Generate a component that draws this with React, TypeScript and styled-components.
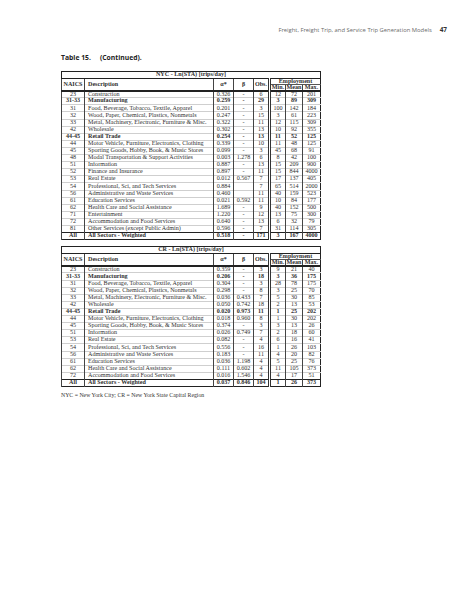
import React from 'react';
import styled, { createGlobalStyle } from 'styled-components';

const GlobalStyle = createGlobalStyle`
  html, body {
    margin: 0;
    padding: 0;
    background: #fff;
  }
`;

const Page = styled.div`
  width: 474px;
  height: 613px;
  box-sizing: border-box;
  padding: 26px 0 0 61px;
  display: flex;
  flex-direction: column;
  align-items: flex-start;
`;

const RunningHead = styled.div`
  align-self: stretch;
  display: flex;
  justify-content: flex-end;
  align-items: baseline;
  gap: 8px;
  padding-right: 27px;
  font-family: "Open Sans", "Liberation Sans", sans-serif;
  font-size: 5.85px;
  line-height: 8px;
  color: #6a6a6a;
`;

const PageNo = styled.span`
  font-weight: 700;
  font-size: 6.4px;
  color: #333;
`;

const Caption = styled.div`
  margin-top: 19px;
  display: flex;
  gap: 9px;
  font-family: "Open Sans", "Liberation Sans", sans-serif;
  font-weight: 700;
  font-size: 6.8px;
  line-height: 9px;
  color: #222;
`;

const Table = styled.table<{ $gap: number }>`
  margin-top: ${p => p.$gap}px;
  width: 259px;
  table-layout: fixed;
  border-collapse: collapse;
  border: 1.5px solid #222;
  font-family: "Liberation Serif", "Times New Roman", serif;
  font-size: 6.1px;
  color: #303030;
`;

const Col = styled.col<{ $w: number }>`
  width: ${p => p.$w}px;
`;

const BarCell = styled.th`
  height: 5.5px;
  padding: 0;
  line-height: 5.5px;
  font-weight: 700;
  text-align: center;
  border-bottom: 1.5px solid #222;
`;

const HeadCell = styled.th<{ $left?: boolean; $sep?: boolean; $base?: boolean }>`
  height: 5px;
  padding: ${p => (p.$left ? '0 0 0 3px' : '0')};
  line-height: 5px;
  font-weight: 700;
  text-align: ${p => (p.$left ? 'left' : 'center')};
  border-left: ${p => (p.$sep ? '3px double #333' : '1px solid #444')};
  border-bottom: ${p => (p.$base ? '2px solid #222' : '1px solid #555')};
`;

const Row = styled.tr`
  height: 7.1px;
`;

const Cell = styled.td<{ $left?: boolean; $sep?: boolean; $bold?: boolean; $total?: boolean }>`
  padding: ${p => (p.$left ? '0 0 0 3px' : '0')};
  line-height: 5.8px;
  text-align: ${p => (p.$left ? 'left' : 'center')};
  font-weight: ${p => (p.$bold ? 700 : 400)};
  white-space: nowrap;
  overflow: hidden;
  border-left: ${p => (p.$sep ? '3px double #333' : '1px solid #444')};
  border-top: ${p => (p.$total ? '1.5px solid #222' : '1px solid #cfcfcf')};
`;

const Footnote = styled.div`
  margin-top: 5px;
  font-family: "Liberation Serif", "Times New Roman", serif;
  font-size: 5.8px;
  line-height: 7px;
  color: #333;
`;

type Line = [string, string, string, string, string, string, string, string];

const nyc: Line[] = [
  ['23', 'Construction', '0.326', '-', '6', '12', '72', '201'],
  ['31-33', 'Manufacturing', '0.259', '-', '29', '3', '89', '309'],
  ['31', 'Food, Beverage, Tobacco, Textile, Apparel', '0.201', '-', '3', '100', '142', '184'],
  ['32', 'Wood, Paper, Chemical, Plastics, Nonmetals', '0.247', '-', '15', '3', '61', '223'],
  ['33', 'Metal, Machinery, Electronic, Furniture & Misc.', '0.322', '-', '11', '12', '115', '309'],
  ['42', 'Wholesale', '0.302', '-', '13', '10', '92', '355'],
  ['44-45', 'Retail Trade', '0.254', '-', '13', '11', '52', '125'],
  ['44', 'Motor Vehicle, Furniture, Electronics, Clothing', '0.339', '-', '10', '11', '48', '125'],
  ['45', 'Sporting Goods, Hobby, Book, & Music Stores', '0.099', '-', '3', '45', '68', '91'],
  ['48', 'Modal Transportation & Support Activities', '0.003', '1.278', '6', '8', '42', '100'],
  ['51', 'Information', '0.887', '-', '13', '15', '209', '900'],
  ['52', 'Finance and Insurance', '0.897', '-', '11', '15', '844', '4000'],
  ['53', 'Real Estate', '0.012', '0.567', '7', '17', '137', '405'],
  ['54', 'Professional, Sci, and Tech Services', '0.884', '', '7', '65', '514', '2000'],
  ['56', 'Administrative and Waste Services', '0.460', '', '11', '40', '159', '523'],
  ['61', 'Education Services', '0.021', '0.592', '11', '10', '84', '177'],
  ['62', 'Health Care and Social Assistance', '1.689', '-', '9', '40', '152', '500'],
  ['71', 'Entertainment', '1.220', '-', '12', '13', '75', '300'],
  ['72', 'Accommodation and Food Services', '0.640', '-', '13', '6', '32', '79'],
  ['81', 'Other Services (except Public Admin)', '0.596', '-', '7', '31', '114', '305'],
  ['All', 'All Sectors - Weighted', '0.518', '-', '171', '3', '167', '4000'],
];

const cr: Line[] = [
  ['23', 'Construction', '0.359', '-', '3', '9', '21', '40'],
  ['31-33', 'Manufacturing', '0.206', '-', '18', '3', '36', '175'],
  ['31', 'Food, Beverage, Tobacco, Textile, Apparel', '0.304', '-', '3', '28', '78', '175'],
  ['32', 'Wood, Paper, Chemical, Plastics, Nonmetals', '0.298', '-', '8', '3', '25', '70'],
  ['33', 'Metal, Machinery, Electronic, Furniture & Misc.', '0.036', '0.433', '7', '5', '30', '85'],
  ['42', 'Wholesale', '0.050', '0.742', '18', '2', '13', '53'],
  ['44-45', 'Retail Trade', '0.020', '0.973', '11', '1', '25', '202'],
  ['44', 'Motor Vehicle, Furniture, Electronics, Clothing', '0.018', '0.960', '8', '1', '30', '202'],
  ['45', 'Sporting Goods, Hobby, Book, & Music Stores', '0.374', '-', '3', '3', '13', '26'],
  ['51', 'Information', '0.026', '0.749', '7', '2', '18', '60'],
  ['53', 'Real Estate', '0.082', '-', '4', '6', '16', '41'],
  ['54', 'Professional, Sci, and Tech Services', '0.556', '-', '16', '1', '26', '103'],
  ['56', 'Administrative and Waste Services', '0.183', '-', '11', '4', '20', '82'],
  ['61', 'Education Services', '0.036', '1.198', '4', '5', '25', '76'],
  ['62', 'Health Care and Social Assistance', '0.111', '0.602', '4', '11', '105', '373'],
  ['72', 'Accommodation and Food Services', '0.016', '1.546', '4', '4', '17', '51'],
  ['All', 'All Sectors - Weighted', '0.037', '0.846', '104', '1', '26', '373'],
];

const widths = [23, 129, 20, 20, 16, 16, 17, 18];
const boldCodes = ['31-33', '44-45', 'All'];

const SectorTable = ({ title, rows, gap }: { title: string; rows: Line[]; gap: number }) => (
  <Table $gap={gap}>
    <colgroup>
      {widths.map((w, i) => (
        <Col key={i} $w={w} />
      ))}
    </colgroup>
    <thead>
      <tr>
        <BarCell colSpan={8}>{title}</BarCell>
      </tr>
      <tr>
        <HeadCell rowSpan={2} $base>NAICS</HeadCell>
        <HeadCell rowSpan={2} $left $base>Description</HeadCell>
        <HeadCell rowSpan={2} $base>α*</HeadCell>
        <HeadCell rowSpan={2} $base>β</HeadCell>
        <HeadCell rowSpan={2} $base>Obs.</HeadCell>
        <HeadCell colSpan={3} $sep>Employment</HeadCell>
      </tr>
      <tr>
        <HeadCell $sep $base>Min.</HeadCell>
        <HeadCell $base>Mean</HeadCell>
        <HeadCell $base>Max.</HeadCell>
      </tr>
    </thead>
    <tbody>
      {rows.map(r => {
        const bold = boldCodes.includes(r[0]);
        const total = r[0] === 'All';
        return (
          <Row key={r[0] + r[1]}>
            {r.map((v, i) => (
              <Cell key={i} $left={i === 1} $sep={i === 5} $bold={bold} $total={total}>
                {v}
              </Cell>
            ))}
          </Row>
        );
      })}
    </tbody>
  </Table>
);

const App = () => (
  <>
    <GlobalStyle />
    <Page>
      <RunningHead>
        <span>Freight, Freight Trip, and Service Trip Generation Models</span>
        <PageNo>47</PageNo>
      </RunningHead>
      <Caption>
        <span>Table 15.</span>
        <span>(Continued).</span>
      </Caption>
      <SectorTable title="NYC - Ln(STA) [trips/day]" rows={nyc} gap={9} />
      <SectorTable title="CR - Ln(STA) [trips/day]" rows={cr} gap={6} />
      <Footnote>NYC = New York City; CR = New York State Capital Region</Footnote>
    </Page>
  </>
);

export default App;
